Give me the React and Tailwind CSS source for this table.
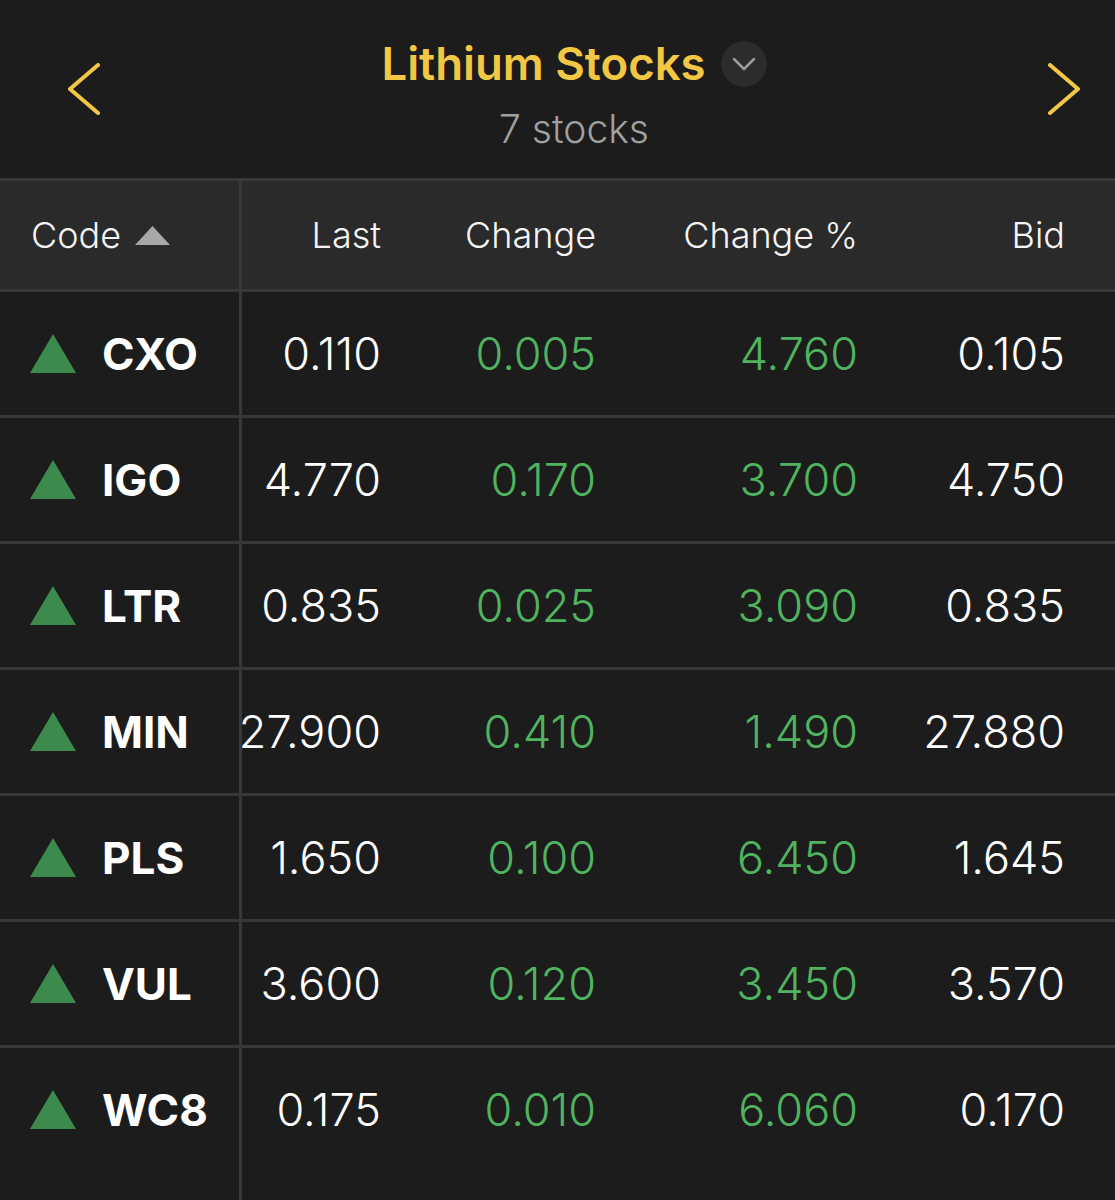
import React from "react";

const rows = [
  ["CXO", "0.110", "0.005", "4.760", "0.105"],
  ["IGO", "4.770", "0.170", "3.700", "4.750"],
  ["LTR", "0.835", "0.025", "3.090", "0.835"],
  ["MIN", "27.900", "0.410", "1.490", "27.880"],
  ["PLS", "1.650", "0.100", "6.450", "1.645"],
  ["VUL", "3.600", "0.120", "3.450", "3.570"],
  ["WC8", "0.175", "0.010", "6.060", "0.170"],
];

function UpTri() {
  return (
    <svg width="46" height="39" viewBox="0 0 46 39" className="shrink-0">
      <polygon points="23,0 46,39 0,39" fill="#3c8a4c" />
    </svg>
  );
}

export default function App() {
  return (
    <div
      className="w-[1115px] h-[1200px] overflow-hidden bg-[#1c1c1c] text-white flex flex-col"
      style={{ fontFamily: "Inter, 'Liberation Sans', sans-serif" }}
    >
      {/* Top bar */}
      <div className="h-[178px] shrink-0 flex items-start pl-[68px] pr-[35px]">
        <div className="pt-[63px]">
          <svg width="32" height="52" viewBox="0 0 32 52">
            <polyline points="30,2 2,26 30,50" fill="none" stroke="#f2c744" strokeWidth="4" strokeLinecap="round" strokeLinejoin="round" />
          </svg>
        </div>
        <div className="flex-1 flex flex-col items-center pt-[35px]">
          <div className="flex items-center gap-[15px]">
            <span className="text-[45.5px] leading-[58px] font-semibold text-[#f2c744]">Lithium Stocks</span>
            <span className="w-[46px] h-[46px] rounded-full bg-[#2c2c2c] flex items-center justify-center">
              <svg width="24" height="14" viewBox="0 0 24 14">
                <polyline points="2,2 12,12 22,2" fill="none" stroke="#9a9a9a" strokeWidth="2.5" strokeLinecap="round" strokeLinejoin="round" />
              </svg>
            </span>
          </div>
          <div className="text-[39px] leading-[48px] font-light text-[#a0a0a0] mt-[12px]">7 stocks</div>
        </div>
        <div className="pt-[63px]">
          <svg width="32" height="52" viewBox="0 0 32 52">
            <polyline points="2,2 30,26 2,50" fill="none" stroke="#f2c744" strokeWidth="4" strokeLinecap="round" strokeLinejoin="round" />
          </svg>
        </div>
      </div>

      {/* Table */}
      <div className="flex-1 flex flex-col border-t-[3px] border-[#383838]">
        {/* Header row */}
        <div className="h-[108px] shrink-0 flex bg-[#2a2a2a] text-[36px] font-light text-[#f4f4f4]">
          <div className="w-[242px] shrink-0 flex items-center pl-[31px] gap-[14px] border-r-[3px] border-[#383838]">
            <span>Code</span>
            <svg width="35" height="19" viewBox="0 0 35 19">
              <polygon points="17.5,0 35,19 0,19" fill="#a8a8a8" />
            </svg>
          </div>
          <div className="w-[139px] shrink-0 flex items-center justify-end">Last</div>
          <div className="w-[215px] shrink-0 flex items-center justify-end">Change</div>
          <div className="w-[262px] shrink-0 flex items-center justify-end">Change %</div>
          <div className="w-[207px] shrink-0 flex items-center justify-end">Bid</div>
        </div>

        {rows.map((r) => (
          <div key={r[0]} className="h-[126px] shrink-0 flex border-t-[3px] border-[#383838] text-[45px] font-light">
            <div className="w-[242px] shrink-0 flex items-center pl-[30px] gap-[26px] border-r-[3px] border-[#383838]">
              <UpTri />
              <span className="font-bold text-[44px]">{r[0]}</span>
            </div>
            <div className="w-[139px] shrink-0 flex items-center justify-end overflow-hidden whitespace-nowrap">
              <span className="shrink-0">{r[1]}</span>
            </div>
            <div className="w-[215px] shrink-0 flex items-center justify-end text-[#4fb35f]">{r[2]}</div>
            <div className="w-[262px] shrink-0 flex items-center justify-end text-[#4fb35f]">{r[3]}</div>
            <div className="w-[207px] shrink-0 flex items-center justify-end">{r[4]}</div>
          </div>
        ))}
        <div className="flex-1 flex">
          <div className="w-[242px] shrink-0 border-r-[3px] border-[#383838]" />
        </div>
      </div>
    </div>
  );
}
